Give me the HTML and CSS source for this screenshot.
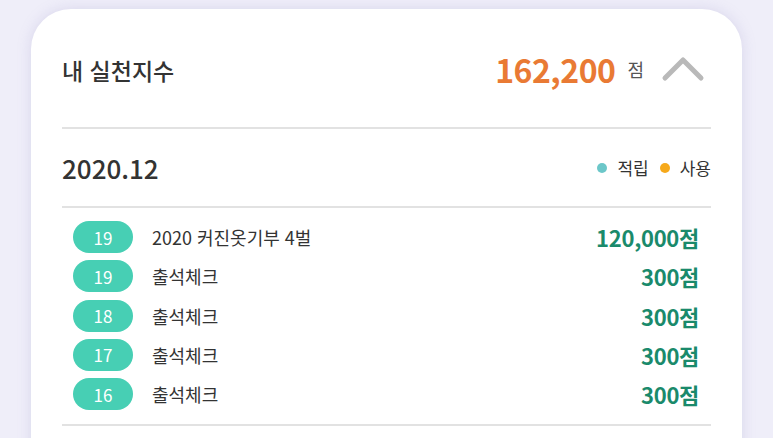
FILE: index.html
```html
<!DOCTYPE html>
<html lang="ko">
<head>
<meta charset="utf-8">
<link rel="stylesheet" href="styles.css">
</head>
<body>
<div class="card">
  <div class="header">
    <div class="title">내 실천지수</div>
    <div class="total">
      <span class="total-num">162,200</span>
      <span class="total-unit">점</span>
      <svg class="chev" width="44" height="28" viewBox="0 0 44 28"><path d="M4 23 L22 5 L40 23" fill="none" stroke="#b9b9b9" stroke-width="5" stroke-linecap="round" stroke-linejoin="round"/></svg>
    </div>
  </div>
  <div class="month">
    <div class="month-label">2020.12</div>
    <div class="legend">
      <span class="dot dot-earn"></span><span class="legend-text">적립</span>
      <span class="dot dot-use"></span><span class="legend-text">사용</span>
    </div>
  </div>
  <div class="list">
    <div class="row"><span class="pill">19</span><span class="desc">2020 커진옷기부 4벌</span><span class="amt">120,000점</span></div>
    <div class="row"><span class="pill">19</span><span class="desc">출석체크</span><span class="amt">300점</span></div>
    <div class="row"><span class="pill">18</span><span class="desc">출석체크</span><span class="amt">300점</span></div>
    <div class="row"><span class="pill">17</span><span class="desc">출석체크</span><span class="amt">300점</span></div>
    <div class="row"><span class="pill">16</span><span class="desc">출석체크</span><span class="amt">300점</span></div>
  </div>
</div>
</body>
</html>
```
FILE: styles.css
```css
html, body {
  margin: 0;
  padding: 0;
  background: #efeef9;
  height: 100%;
  overflow: hidden;
}
body {
  font-family: "Noto Sans CJK KR", "Noto Sans", sans-serif;
  color: #333;
  padding-top: 9px;
}
.card {
  margin-left: 31px;
  width: 711px;
  box-sizing: border-box;
  padding: 0 31px;
  background: #fff;
  border-radius: 40px 40px 0 0;
  box-shadow: 0 0 14px rgba(150, 145, 200, 0.25);
  height: 460px;
}
.header {
  height: 118px;
  display: flex;
  align-items: center;
  justify-content: space-between;
  border-bottom: 2px solid #e2e2e2;
}
.title {
  font-size: 23px;
  font-weight: 500;
  color: #333;
  padding-top: 4px;
}
.total {
  display: flex;
  align-items: center;
  padding-top: 2px;
}
.total-num {
  font-size: 32px;
  font-weight: 700;
  color: #e97a34;
  letter-spacing: -0.5px;
}
.total-unit {
  font-size: 18px;
  color: #555;
  margin-left: 12px;
}
.chev {
  margin-left: 17px;
  margin-right: 6px;
}
.month {
  height: 77px;
  display: flex;
  align-items: center;
  justify-content: space-between;
  border-bottom: 2px solid #e2e2e2;
}
.month-label {
  font-size: 26px;
  font-weight: 500;
  color: #333;
}
.legend {
  display: flex;
  align-items: center;
  font-size: 17px;
  color: #333;
}
.dot {
  width: 10px;
  height: 10px;
  border-radius: 50%;
  margin-right: 10px;
}
.dot-earn { background: #6cc7c9; }
.dot-use { background: #f6a91b; margin-left: 11px; }
.list {
  padding: 13px 0 14px;
  display: flex;
  flex-direction: column;
  gap: 7.3px;
  border-bottom: 2px solid #e2e2e2;
}
.row {
  height: 32px;
  display: flex;
  align-items: center;
}
.pill {
  margin-left: 11px;
  width: 60px;
  height: 32px;
  border-radius: 16px;
  background: #47cfb4;
  color: #fff;
  font-size: 17px;
  display: flex;
  align-items: center;
  justify-content: center;
}
.desc {
  margin-left: 19px;
  font-size: 18px;
  line-height: 32px;
  color: #333;
  flex: 1;
}
.amt {
  margin-right: 12px;
  font-size: 22px;
  font-weight: 700;
  line-height: 32px;
  color: #1a8a6b;
  letter-spacing: -0.3px;
}
```
